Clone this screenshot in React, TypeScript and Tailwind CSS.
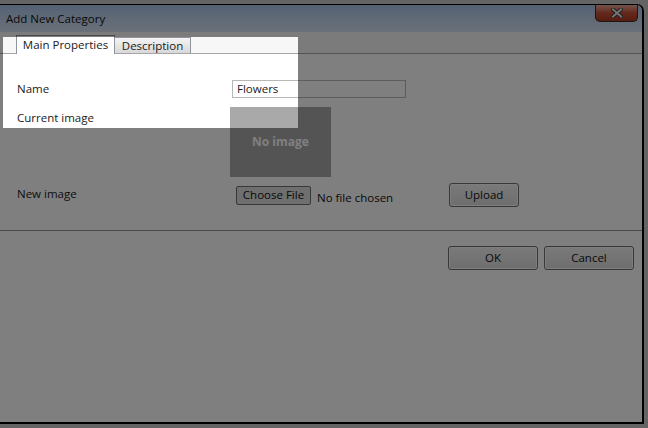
import React from "react";

function Btn({ label, className }: { label: string; className: string }) {
  return (
    <button
      className={
        "flex items-center justify-center rounded-[3px] border border-[#707070] bg-gradient-to-b from-[#f4f4f4] to-[#dcdcdc] text-[11.5px] text-[#111] shadow-[inset_0_0_0_1px_#fcfcfc] " +
        className
      }
    >
      {label}
    </button>
  );
}

export default function App() {
  return (
    <div
      className="relative h-[428px] w-[648px] overflow-hidden bg-[#c8c8c8] pt-[4px] text-[#1a1a1a]"
      style={{ fontFamily: "'Open Sans', 'Noto Sans', sans-serif" }}
    >
      <div className="relative ml-[-2px] flex h-[420px] w-[646px] flex-col rounded-tr-[7px] border-t border-r-2 border-b-2 border-black bg-white">
        {/* title bar */}
        <div className="flex h-[27px] items-center rounded-tr-[6px] bg-gradient-to-b from-[#a9c4ea] to-[#d6e2f0] pl-[8px] text-[11.5px] text-[#111]">
          Add New Category
        </div>
        <div className="absolute right-[4px] top-0 flex h-[17px] w-[43px] items-center justify-center rounded-b-[5px] border border-t-0 border-[#3c2a2a] bg-gradient-to-b from-[#e9a89a] via-[#c8503a] to-[#b03a22]">
          <svg width="12" height="10" viewBox="0 0 12 10">
            <path d="M2 1.5 L10 8.5 M10 1.5 L2 8.5" stroke="#4a3a3a" strokeWidth="4" strokeLinecap="square" />
            <path d="M2 1.5 L10 8.5 M10 1.5 L2 8.5" stroke="#e8e8e8" strokeWidth="2" strokeLinecap="square" />
          </svg>
        </div>

        {/* tab strip */}
        <div className="flex h-[22px] items-end border-b border-[#a6a6a6] bg-[#f7f7f7] pl-[18px]">
          <div className="mb-[-1px] flex h-[19px] w-[99px] items-center justify-center border border-b-0 border-[#8f939b] bg-white text-[11.5px]">
            Main Properties
          </div>
          <div className="flex h-[16px] w-[76px] items-center justify-center border border-l-0 border-b-0 border-[#8f939b] bg-gradient-to-b from-[#f4f4f4] to-[#d8d8d8] text-[11.5px]">
            Description
          </div>
        </div>

        {/* body */}
        <div className="flex h-[177px] flex-col border-b border-[#8e9a9a] pl-[19px] text-[11.5px]">
          <div className="mt-[26px] flex h-[18px] items-center">
            <div className="w-[215px]">Name</div>
            <div className="flex h-[18px] w-[174px] items-center border border-[#b8b8b8] pl-[4px]">Flowers</div>
          </div>
          <div className="mt-[9px] flex">
            <div className="mt-[2px] w-[213px] leading-[18px]">Current image</div>
            <div className="flex h-[70px] w-[101px] items-center justify-center bg-[#a9a9a9] text-[12px] font-bold text-white">
              No image
            </div>
          </div>
          <div className="mt-[6px] flex h-[24px] items-center">
            <div className="-mt-[2px] w-[219px]">New image</div>
            <div className="flex w-[213px] items-center">
              <button className="flex h-[19px] w-[75px] items-center justify-center rounded-[2px] border border-[#707070] bg-[#dedede] text-[11.5px] text-[#111]">
                Choose File
              </button>
              <span className="ml-[6px] mt-[5px] text-[11.5px] text-[#111]">No file chosen</span>
            </div>
            <Btn label="Upload" className="h-[24px] w-[70px]" />
          </div>
        </div>

        {/* footer */}
        <div className="flex flex-1 justify-end gap-[6px] pr-[8px] pt-[15px]">
          <Btn label="OK" className="h-[24px] w-[90px]" />
          <Btn label="Cancel" className="h-[24px] w-[90px]" />
        </div>
      </div>

      {/* spotlight overlay */}
      <div className="absolute left-[3px] top-[37px] h-[91px] w-[295px] shadow-[0_0_0_1200px_rgba(0,0,0,0.5)]" />
    </div>
  );
}
